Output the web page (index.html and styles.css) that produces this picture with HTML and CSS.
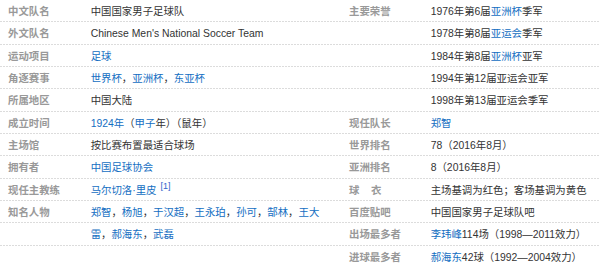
FILE: index.html
```html
<!DOCTYPE html>
<html lang="zh-CN">
<head>
<meta charset="utf-8">
<title>中国国家男子足球队</title>
<link rel="stylesheet" href="styles.css">
</head>
<body>
<div class="basic-info">
  <dl class="col col-left">
    <div class="item"><dt class="name">中文队名</dt><dd class="value">中国国家男子足球队</dd></div>
    <div class="item"><dt class="name">外文队名</dt><dd class="value">Chinese Men's National Soccer Team</dd></div>
    <div class="item"><dt class="name">运动项目</dt><dd class="value"><a>足球</a></dd></div>
    <div class="item"><dt class="name">角逐赛事</dt><dd class="value"><a>世界杯</a>，<a>亚洲杯</a>，<a>东亚杯</a></dd></div>
    <div class="item"><dt class="name">所属地区</dt><dd class="value">中国大陆</dd></div>
    <div class="item"><dt class="name">成立时间</dt><dd class="value"><a>1924年</a>（<a>甲子</a>年）（鼠年）</dd></div>
    <div class="item"><dt class="name">主场馆</dt><dd class="value">按比赛布置最适合球场</dd></div>
    <div class="item"><dt class="name">拥有者</dt><dd class="value"><a>中国足球协会</a></dd></div>
    <div class="item"><dt class="name">现任主教练</dt><dd class="value"><a>马尔切洛·里皮</a> <sup class="ref">[1]</sup></dd></div>
    <div class="item"><dt class="name">知名人物</dt><dd class="value"><a>郑智</a>，<a>杨旭</a>，<a>于汉超</a>，<a>王永珀</a>，<a>孙可</a>，<a>郜林</a>，<a>王大</a></dd></div>
    <div class="item"><dt class="name"></dt><dd class="value"><a>雷</a>，<a>郝海东</a>，<a>武磊</a></dd></div>
  </dl>
  <dl class="col col-right">
    <div class="item"><dt class="name">主要荣誉</dt><dd class="value">1976年第6届<a>亚洲杯</a>季军</dd></div>
    <div class="item"><dt class="name"></dt><dd class="value">1978年第8届<a>亚运会</a>季军</dd></div>
    <div class="item"><dt class="name"></dt><dd class="value">1984年第8届<a>亚洲杯</a>亚军</dd></div>
    <div class="item"><dt class="name"></dt><dd class="value">1994年第12届亚运会亚军</dd></div>
    <div class="item"><dt class="name"></dt><dd class="value">1998年第13届亚运会季军</dd></div>
    <div class="item"><dt class="name">现任队长</dt><dd class="value"><a>郑智</a></dd></div>
    <div class="item"><dt class="name">世界排名</dt><dd class="value">78（2016年8月）</dd></div>
    <div class="item"><dt class="name">亚洲排名</dt><dd class="value">8（2016年8月）</dd></div>
    <div class="item"><dt class="name">球&nbsp;&nbsp;&nbsp;&nbsp;衣</dt><dd class="value">主场基调为红色；客场基调为黄色</dd></div>
    <div class="item"><dt class="name">百度贴吧</dt><dd class="value">中国国家男子足球队吧</dd></div>
    <div class="item"><dt class="name">出场最多者</dt><dd class="value"><a>李玮峰</a>114场（1998—2011效力）</dd></div>
    <div class="item"><dt class="name">进球最多者</dt><dd class="value"><a>郝海东</a>42球（1992—2004效力）</dd></div>
  </dl>
</div>
</body>
</html>
```
FILE: styles.css
```css
html, body {
  margin: 0;
  padding: 0;
  background: #fff;
}

body {
  font-family: "Liberation Sans", "Noto Sans CJK SC", sans-serif;
  font-size: 10.4px;
  line-height: 21.33px;
  color: #333;
}

.basic-info {
  display: flex;
  overflow: hidden;
}

.col {
  margin: 0;
  padding: 0;
}

.col-left {
  width: 342px;
  flex: none;
}

.col-right {
  flex: 1;
  min-width: 0;
}

.item {
  display: flex;
  height: 22.33px;
  box-sizing: border-box;
  padding-top: 1px;
  padding-bottom: 1px;
  background-image: linear-gradient(to right, #dcdcdc 2px, transparent 2px);
  background-size: 3px 1px;
  background-repeat: repeat-x;
  background-position: left bottom;
}

.name {
  flex: none;
  width: 82.7px;
  padding-left: 8px;
  margin: 0;
  color: #999;
  font-weight: 700;
  white-space: nowrap;
}

.col-right .name {
  padding-left: 7px;
  width: 81.7px;
}

.value {
  margin: 0;
  white-space: nowrap;
  color: #333;
}

.value a {
  color: #136ec2;
  text-decoration: none;
}

.ref {
  color: #3366cc;
  font-size: 9px;
  line-height: 0;
  vertical-align: 5px;
  margin-left: 1px;
}
```
